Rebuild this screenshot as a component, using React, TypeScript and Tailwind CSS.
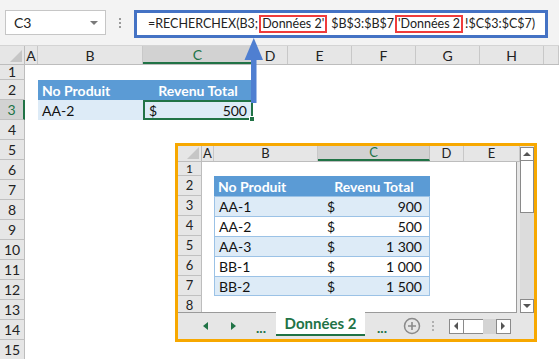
const mainCols = [
  { l: "A", w: "w-[13px]" },
  { l: "B", w: "w-[105px]" },
  { l: "C", w: "w-[110px]", sel: true },
  { l: "D", w: "w-[35px]" },
  { l: "E", w: "w-[64px]" },
  { l: "F", w: "w-[64px]" },
  { l: "G", w: "w-[64px]" },
  { l: "H", w: "w-[64px]" },
  { l: "", w: "w-[15px]" },
];

const insetCols = [
  { l: "A", w: "w-[12px]" },
  { l: "B", w: "w-[104px]" },
  { l: "C", w: "w-[112px]", sel: true },
  { l: "D", w: "w-[34px]" },
  { l: "E", w: "w-[56px]" },
];

const insetData = [
  { p: "AA-1", v: "900", alt: true },
  { p: "AA-2", v: "500", alt: false },
  { p: "AA-3", v: "1 300", alt: true },
  { p: "BB-1", v: "1 000", alt: false },
  { p: "BB-2", v: "1 500", alt: true },
];

function Corner({ w }: { w: string }) {
  return (
    <div className={`${w} h-full relative border-r border-[#bdbdbd] bg-[#e6e6e6]`}>
      <div className="absolute right-[2px] bottom-[2px] w-0 h-0 border-l-[12px] border-l-transparent border-b-[12px] border-b-[#c6c6c6]" />
    </div>
  );
}

function FormulaBar() {
  return (
    <div className="h-[46px] bg-[#f3f3f3] border-b border-[#d4d4d4] flex items-start pt-[10px] pl-[5px]">
      <div className="w-[101px] h-[25px] bg-white border border-[#c6c6c6] flex items-center justify-between pl-[8px] pr-[7px] text-[14px] text-[#222]">
        <span>C3</span>
        <span className="w-0 h-0 border-l-[4px] border-r-[4px] border-t-[4px] border-l-transparent border-r-transparent border-t-[#7a7a7a]" />
      </div>
      <div className="w-[28px] h-[25px] flex flex-col items-center justify-center gap-[2px]">
        <span className="w-[2px] h-[2px] bg-[#9a9a9a]" />
        <span className="w-[2px] h-[2px] bg-[#9a9a9a]" />
        <span className="w-[2px] h-[2px] bg-[#9a9a9a]" />
      </div>
      <div className="w-[414px] h-[28px] bg-white border-[3px] border-[#4472c4] flex items-center pl-[11px] text-[12.5px] text-[#222] whitespace-nowrap">
        <span className="shrink-0">=RECHERCHEX(B3;</span>
        <span className="ml-[1px] h-[18px] shrink-0 border-2 border-[#f03c3c] flex items-center px-[1px] leading-none">Données 2'</span>
        <span className="ml-[4px] shrink-0">$B$3:$B$7</span>
        <span className="ml-[1px] h-[18px] shrink-0 border-2 border-[#f03c3c] flex items-center px-[1px] leading-none">'Données 2</span>
        <span className="ml-[2px] shrink-0">!$C$3:$C$7)</span>
      </div>
    </div>
  );
}

function MainHeader() {
  return (
    <div className="h-[19px] flex bg-[#e6e6e6] border-b border-[#bdbdbd] text-[14px]">
      <Corner w="w-[25px]" />
      {mainCols.map((c, i) =>
        c.sel ? (
          <div
            key={i}
            className={`${c.w} h-full shrink-0 flex items-center justify-center bg-[#d2d2d2] border-b-2 border-[#217346] text-[#217346] border-r border-r-[#bdbdbd]`}
          >
            {c.l}
          </div>
        ) : (
          <div
            key={i}
            className={`${c.w} h-full shrink-0 flex items-center justify-center border-r border-[#c8c8c8] text-[#222]`}
          >
            {c.l}
          </div>
        )
      )}
    </div>
  );
}

function RowHead({ n, sel, h }: { n: number; sel?: boolean; h: string }) {
  return sel ? (
    <div className={`w-[25px] ${h} shrink-0 flex items-center justify-center bg-[#d2d2d2] border-r-2 border-[#217346] border-b border-b-[#c0c0c0] text-[#217346] text-[14px] leading-none`}>
      {n}
    </div>
  ) : (
    <div className={`w-[25px] ${h} shrink-0 flex items-center justify-center bg-[#e6e6e6] border-r border-[#bdbdbd] border-b border-b-[#c0c0c0] text-[#222] text-[14px] leading-none`}>
      {n}
    </div>
  );
}

function MainGrid() {
  const rest = [4, 5, 6, 7, 8, 9, 10, 11, 12, 13, 14, 15];
  return (
    <div className="flex flex-col">
      <div className="flex">
        <RowHead n={1} h="h-[15px]" />
      </div>
      <div className="flex">
        <RowHead n={2} h="h-[20px]" />
        <div className="w-[13px]" />
        <div className="w-[105px] h-[20px] bg-[#5b9bd5] text-white font-bold text-[14px] flex items-center pl-[4px]">
          No Produit
        </div>
        <div className="w-[110px] h-[20px] bg-[#5b9bd5] text-white font-bold text-[14px] flex items-center justify-center">
          Revenu Total
        </div>
      </div>
      <div className="flex">
        <RowHead n={3} sel h="h-[20px]" />
        <div className="w-[13px]" />
        <div className="w-[105px] h-[20px] bg-[#ddebf7] text-[14px] text-[#111] flex items-center pl-[4px]">
          AA-2
        </div>
        <div className="w-[110px] h-[20px] bg-[#ddebf7] border-2 border-[#217346] text-[14px] text-[#111] flex items-center justify-between pl-[4px] pr-[4px] relative">
          <span>$</span>
          <span>500</span>
          <div className="absolute -right-[4px] -bottom-[4px] w-[6px] h-[6px] bg-[#217346] border border-white" />
        </div>
      </div>
      {rest.map((n) => (
        <div key={n} className="flex">
          <RowHead n={n} h="h-[20px]" />
        </div>
      ))}
    </div>
  );
}

function InsetRowHead({ n, h, small }: { n: number; h: string; small?: boolean }) {
  return (
    <div className={`w-[24px] ${h} shrink-0 flex items-center justify-center bg-[#e6e6e6] border-r border-[#bdbdbd] border-b border-b-[#c0c0c0] text-[#222] ${small ? "text-[12px]" : "text-[13px]"} leading-none`}>
      {n}
    </div>
  );
}

function Inset() {
  return (
    <div className="absolute left-[175px] top-[143px] w-[362px] h-[199px] border-[3px] border-[#f7a800] bg-[#e6e6e6] flex flex-col overflow-hidden">
      <div className="flex h-[167px]">
        <div className="w-[342px] flex flex-col">
          <div className="h-[16px] flex bg-[#e6e6e6] border-b border-[#bdbdbd] text-[13px] leading-none">
            <Corner w="w-[24px]" />
            {insetCols.map((c, i) =>
              c.sel ? (
                <div
                  key={i}
                  className={`${c.w} h-full shrink-0 flex items-center justify-center bg-[#d2d2d2] border-b-2 border-[#217346] text-[#217346] border-r border-r-[#bdbdbd]`}
                >
                  {c.l}
                </div>
              ) : (
                <div
                  key={i}
                  className={`${c.w} h-full shrink-0 flex items-center justify-center border-r border-[#c8c8c8] text-[#222]`}
                >
                  {c.l}
                </div>
              )
            )}
          </div>
          <div className="flex h-[151px]">
            <div className="w-[339px] bg-white border-r border-b border-[#9a9a9a] flex flex-col overflow-hidden">
              <div className="flex">
                <InsetRowHead n={1} h="h-[14px]" small />
              </div>
              <div className="flex">
                <InsetRowHead n={2} h="h-[20px]" />
                <div className="w-[12px]" />
                <div className="w-[104px] h-[20px] bg-[#5b9bd5] text-white font-bold text-[14px] flex items-center pl-[4px]">
                  No Produit
                </div>
                <div className="w-[112px] h-[20px] bg-[#5b9bd5] text-white font-bold text-[14px] flex items-center justify-center">
                  Revenu Total
                </div>
              </div>
              {insetData.map((r, i) => (
                <div key={i} className="flex">
                  <InsetRowHead n={i + 3} h="h-[20px]" />
                  <div className="w-[12px]" />
                  <div
                    className={`w-[104px] h-[20px] border-t border-l border-[#9bc2e6] text-[14px] text-[#111] flex items-center pl-[4px] ${
                      r.alt ? "bg-[#ddebf7]" : "bg-white"
                    } ${i === 4 ? "border-b" : ""}`}
                  >
                    {r.p}
                  </div>
                  <div
                    className={`w-[112px] h-[20px] border-t border-r border-[#9bc2e6] text-[14px] text-[#111] flex items-center justify-between pl-[9px] pr-[7px] ${
                      r.alt ? "bg-[#ddebf7]" : "bg-white"
                    } ${i === 4 ? "border-b" : ""}`}
                  >
                    <span>$</span>
                    <span>{r.v}</span>
                  </div>
                </div>
              ))}
              <div className="flex">
                <InsetRowHead n={8} h="h-[20px]" />
              </div>
            </div>
          </div>
        </div>
        <div className="w-[14px] flex flex-col">
          <div className="h-[14px] mt-[1px] bg-white border border-[#8a8a8a] flex items-center justify-center">
            <span className="w-0 h-0 border-l-[4px] border-r-[4px] border-b-[4px] border-l-transparent border-r-transparent border-b-[#555]" />
          </div>
          <div className="h-[52px] bg-white border border-[#8a8a8a] border-t-0" />
          <div className="flex-1 bg-[#dcdcdc]" />
          <div className="h-[14px] bg-white border border-[#8a8a8a] flex items-center justify-center">
            <span className="w-0 h-0 border-l-[4px] border-r-[4px] border-t-[4px] border-l-transparent border-r-transparent border-t-[#555]" />
          </div>
        </div>
      </div>
      <div className="h-[26px] flex items-start bg-[#e6e6e6] text-[#217346]">
        <div className="w-[98px] h-full flex items-center">
          <span className="ml-[25px] w-0 h-0 border-t-[4px] border-b-[4px] border-r-[5px] border-t-transparent border-b-transparent border-r-[#217346]" />
          <span className="ml-[23px] w-0 h-0 border-t-[4px] border-b-[4px] border-l-[5px] border-t-transparent border-b-transparent border-l-[#217346]" />
          <span className="ml-[20px] font-bold text-[14px] leading-none mt-[4px]">...</span>
        </div>
        <div className="w-[89px] h-[24px] bg-white border-b-2 border-[#217346] flex items-center justify-center font-bold text-[15px] -mt-[1px]">
          Données 2
        </div>
        <div className="flex-1 h-full flex items-center">
          <span className="ml-[12px] font-bold text-[14px] leading-none mt-[4px]">...</span>
          <svg width="18" height="18" viewBox="0 0 18 18" className="ml-[16px]">
            <circle cx="9" cy="9" r="7.5" fill="none" stroke="#8a8a8a" strokeWidth="1.5" />
            <path d="M9 5v8M5 9h8" stroke="#8a8a8a" strokeWidth="1.6" />
          </svg>
          <div className="ml-[11px] flex flex-col gap-[2px]">
            <span className="w-[2px] h-[2px] bg-[#b0b0b0]" />
            <span className="w-[2px] h-[2px] bg-[#b0b0b0]" />
            <span className="w-[2px] h-[2px] bg-[#b0b0b0]" />
          </div>
          <div className="ml-[15px] flex h-[15px]">
            <div className="w-[15px] bg-white border border-[#8a8a8a] flex items-center justify-center">
              <span className="w-0 h-0 border-t-[4px] border-b-[4px] border-r-[4px] border-t-transparent border-b-transparent border-r-[#555]" />
            </div>
            <div className="w-[19px] bg-white border-y border-[#8a8a8a]" />
            <div className="w-[13px] bg-[#d4d4d4]" />
            <div className="w-[15px] bg-white border border-[#8a8a8a] flex items-center justify-center">
              <span className="w-0 h-0 border-t-[4px] border-b-[4px] border-l-[4px] border-t-transparent border-b-transparent border-l-[#555]" />
            </div>
          </div>
        </div>
      </div>
    </div>
  );
}

function Arrow() {
  return (
    <svg className="absolute left-[240px] top-[36px]" width="28" height="70" viewBox="0 0 28 70">
      <rect x="11" y="18" width="5.5" height="49" fill="#4f7fd1" />
      <path d="M13.75 2 L23 24 L4.5 24 Z" fill="#4f7fd1" />
    </svg>
  );
}

export default function App() {
  return (
    <div className="w-[559px] h-[359px] relative overflow-hidden bg-white font-[Lato,sans-serif]">
      <FormulaBar />
      <MainHeader />
      <MainGrid />
      <Inset />
      <Arrow />
    </div>
  );
}
